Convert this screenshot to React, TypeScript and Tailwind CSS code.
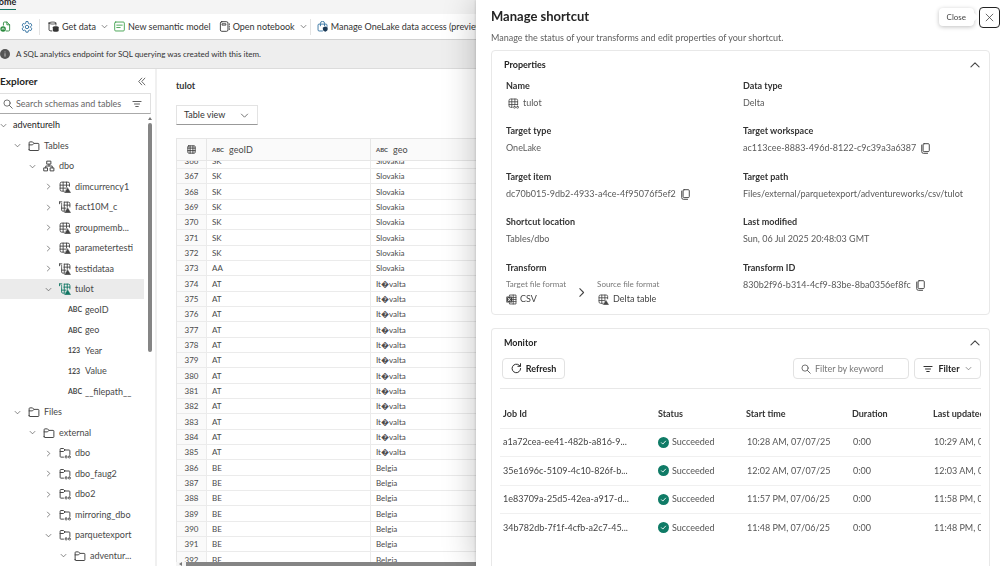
import type { ReactNode } from "react";
import { clsx } from "clsx";

type IconProps = { className?: string };

function Svg({ className, children }: { className?: string; children: ReactNode }) {
  return (
    <svg
      viewBox="0 0 16 16"
      fill="none"
      stroke="currentColor"
      strokeLinecap="round"
      strokeLinejoin="round"
      className={clsx("shrink-0", className)}
      aria-hidden="true"
    >
      {children}
    </svg>
  );
}

const ChevronDown = ({ className }: IconProps) => (
  <Svg className={className}><path d="M2.5 5.5 8 11l5.5-5.5" strokeWidth="1.6" /></Svg>
);
const ChevronRight = ({ className }: IconProps) => (
  <Svg className={className}><path d="M5.5 2.5 11 8l-5.5 5.5" strokeWidth="1.6" /></Svg>
);
const ChevronUp = ({ className }: IconProps) => (
  <Svg className={className}><path d="M1.5 11 8 4.500l6.500 6.500" strokeWidth="1.7" /></Svg>
);
const CollapseIcon = ({ className }: IconProps) => (
  <Svg className={className}><path d="M8.5 2 3 8l5.5 6M14 2 8.5 8l5.5 6" strokeWidth="1.4" /></Svg>
);
const SearchIcon = ({ className }: IconProps) => (
  <Svg className={className}><circle cx="6.5" cy="6.5" r="5" strokeWidth="1.3" /><path d="m10.2 10.2 4.6 4.6" strokeWidth="1.4" /></Svg>
);
const FilterIcon = ({ className }: IconProps) => (
  <Svg className={className}><path d="M1.5 4h13M4 8h8M6 12h4" strokeWidth="1.5" /></Svg>
);
const FolderIcon = ({ className }: IconProps) => (
  <Svg className={className}>
    <path d="M1.5 13V3.5a1 1 0 0 1 1-1H6L8 4.5h5.5a1 1 0 0 1 1 1V13a1 1 0 0 1-1 1h-11a1 1 0 0 1-1-1ZM1.5 6.5H6l2-2" strokeWidth="1.3" />
  </Svg>
);
const FolderLinkIcon = ({ className }: IconProps) => (
  <Svg className={className}>
    <path d="M6 13.5H2.5a1 1 0 0 1-1-1V3a1 1 0 0 1 1-1H6l2 2h5.5a1 1 0 0 1 1 1v5M1.5 6H6l2-2" strokeWidth="1.3" />
    <rect x="8" y="12" width="3" height="2.6" rx="1.3" strokeWidth="1.1" />
    <rect x="12.4" y="12" width="3" height="2.6" rx="1.3" strokeWidth="1.1" />
  </Svg>
);
const SchemaIcon = ({ className }: IconProps) => (
  <Svg className={className}>
    <path d="M5.5 1.5h5v4h-5zM1.5 10.5H6v4H1.5zM10 10.5h4.5v4H10zM8 5.5V8M3.7 10.5V8h8.6v2.5" strokeWidth="1.3" />
  </Svg>
);
const DeltaTableIcon = ({ className }: IconProps) => (
  <Svg className={className}>
    <path d="M7 13.5H3.5a2 2 0 0 1-2-2v-8a2 2 0 0 1 2-2h8.500a2 2 0 0 1 2 2V7M1.5 5.500H14M1.5 9.500h8M5.500 1.500v12M10 1.500V8" strokeWidth="1.2" />
    <path d="m11.5 9 4 6.500h-8z" fill="currentColor" strokeWidth="0.5" />
  </Svg>
);
const DeltaShortcutIcon = ({ className }: IconProps) => (
  <Svg className={className}>
    <path d="M7 13.5H5A1.5 1.5 0 0 1 3.5 12V6M7 1.500h5.500a2 2 0 0 1 2 2V8M6.500 5.500h8M3.500 9.500H9M7 1.500v12M11 1.500V8" strokeWidth="1.2" />
    <path d="M.8 1.200h3M.8 1.200v2.500M3.500 3.500v1" strokeWidth="1.3" />
    <path d="m11.5 9 4 6.500h-8z" fill="currentColor" strokeWidth="0.5" />
  </Svg>
);
const TableLinkIcon = ({ className }: IconProps) => (
  <Svg className={className}>
    <path d="M6 13.5H3.5a2 2 0 0 1-2-2v-8a2 2 0 0 1 2-2h8.500a2 2 0 0 1 2 2v6M1.5 5.500H14M1.5 9.500H14M5.500 1.500v12M10 1.500v8" strokeWidth="1.2" />
    <rect x="8" y="12" width="3" height="2.8" rx="1.4" strokeWidth="1.1" />
    <rect x="12.4" y="12" width="3" height="2.8" rx="1.4" strokeWidth="1.1" />
  </Svg>
);
const GridIcon = ({ className }: IconProps) => (
  <Svg className={className}>
    <rect x="1.5" y="1.5" width="13" height="13" rx="1.5" strokeWidth="1.5" />
    <path d="M1.5 5.5h13M1.5 10h13M5.5 1.5v13M10.5 1.5v13" strokeWidth="1.5" />
  </Svg>
);
const CopyIcon = ({ className }: IconProps) => (
  <Svg className={className}>
    <rect x="4.5" y="1" width="9" height="11.5" rx="1.5" strokeWidth="1.4" />
    <path d="M2.5 3v9.5A2.5 2.5 0 0 0 5 15h6" strokeWidth="1.4" />
  </Svg>
);
const ExcelIcon = ({ className }: IconProps) => (
  <Svg className={className}>
    <path d="M5 3V1.5h9.5v13H5V13M9.5 5h5M9.5 8h5M9.5 11h5M10.5 1.5v13" strokeWidth="1.2" />
    <rect x="0.5" y="3.5" width="8.5" height="9" rx="1" fill="currentColor" stroke="none" />
    <path d="m3 5.8 3.5 4.4M6.5 5.8 3 10.2" stroke="#fff" strokeWidth="1.2" />
  </Svg>
);
const RefreshIcon = ({ className }: IconProps) => (
  <Svg className={className}><path d="M14 8a6.200 6.200 0 1 1-2.200-4.800l1.700 1.600M13.800 1v3.800H10" strokeWidth="1.4" /></Svg>
);
const CloseIcon = ({ className }: IconProps) => (
  <Svg className={className}><path d="m2 2 12 12M14 2 2 14" strokeWidth="1.4" /></Svg>
);
const InfoIcon = ({ className }: IconProps) => (
  <Svg className={className}>
    <circle cx="8" cy="8" r="8" fill="currentColor" stroke="none" />
    <path d="M8 7.5v4M8 4.700v.1" stroke="#ddd" strokeWidth="1.3" />
  </Svg>
);
const CheckIcon = ({ className }: IconProps) => (
  <Svg className={className}>
    <circle cx="8" cy="8" r="8" fill="currentColor" stroke="none" />
    <path d="m5 8.3 2 2 4-4.300" stroke="#fff" strokeWidth="1.3" />
  </Svg>
);
const ReportIcon = ({ className }: IconProps) => (
  <Svg className={className}>
    <path d="M5 6V3a1.500 1.500 0 0 1 1.500-1.500H10l4 4V13a1.500 1.500 0 0 1-1.500 1.500H9M10 1.500v4h4" strokeWidth="1.3" />
    <circle cx="4.5" cy="11.5" r="4" fill="currentColor" stroke="none" />
    <path d="M3 12.5a1.600 1.600 0 1 1 3 0" stroke="#fff" />
  </Svg>
);
const GearIcon = ({ className }: IconProps) => (
  <Svg className={className}>
    <path d="m6.600 1.200-.4 2-1.300.7-1.900-.7-1.500 2.500L3 7v1.900l-1.500 1.400L3 12.800l1.900-.6 1.300.7.4 2h2.800l.4-2 1.300-.7 1.900.6 1.500-2.500L13 8.900V7l1.500-1.300L13 3.200l-1.900.7-1.300-.7-.4-2Z" strokeWidth="1.2" />
    <circle cx="8" cy="8" r="2.3" strokeWidth="1.2" />
  </Svg>
);
const DatabaseIcon = ({ className }: IconProps) => (
  <Svg className={className}>
    <path d="M1.5 3c0-2 10-2 10 0s-10 2-10 0Zm0 0v10c0 1 2 1.500 4 1.500M11.500 3v3" strokeWidth="1.3" />
    <path d="M7 9c0-2 8.500-2 8.500 0v5c0 2-8.500 2-8.500 0Z" fill="currentColor" stroke="none" />
  </Svg>
);
const ModelIcon = ({ className }: IconProps) => (
  <Svg className={className}>
    <rect x="1" y="1.5" width="14" height="13" rx="1.5" strokeWidth="1.3" />
    <path d="M4 6h8M4 9.500h5" strokeWidth="1.3" />
  </Svg>
);
const NotebookIcon = ({ className }: IconProps) => (
  <Svg className={className}>
    <rect x="2" y="1" width="11" height="14" rx="2" strokeWidth="1.3" />
    <path d="M5 4h5v2H5zM15 4v1.500M15 7.500V9M15 11v1.500" strokeWidth="1.2" />
  </Svg>
);
const LockIcon = ({ className }: IconProps) => (
  <Svg className={className}>
    <path d="M8 14.5H3A1.500 1.500 0 0 1 1.500 13V6A1.500 1.500 0 0 1 3 4.500h10A1.500 1.500 0 0 1 14.500 6v2M5 7V3.500a3 3 0 0 1 6 0V7" strokeWidth="1.3" />
    <path d="M8.5 9.500 12 8l3.500 1.500v2c0 2-1.500 3.500-3.500 4-2-.5-3.500-2-3.500-4Z" fill="#1b3a57" stroke="none" />
  </Svg>
);

type Node = { label: string; level: number; open?: boolean; icon?: "folder" | "link" | "schema" | "delta" | "shortcut"; type?: string };

const tree: Node[] = [
  { label: "adventurelh", level: 0, open: true },
  { label: "Tables", level: 1, open: true, icon: "folder" },
  { label: "dbo", level: 2, open: true, icon: "schema" },
  { label: "dimcurrency1", level: 3, open: false, icon: "delta" },
  { label: "fact10M_c", level: 3, open: false, icon: "shortcut" },
  { label: "groupmemb...", level: 3, open: false, icon: "delta" },
  { label: "parametertesti", level: 3, open: false, icon: "delta" },
  { label: "testidataa", level: 3, open: false, icon: "shortcut" },
  { label: "tulot", level: 3, open: true, icon: "shortcut" },
  { label: "geoID", level: 4, type: "ABC" },
  { label: "geo", level: 4, type: "ABC" },
  { label: "Year", level: 4, type: "123" },
  { label: "Value", level: 4, type: "123" },
  { label: "__filepath__", level: 4, type: "ABC" },
  { label: "Files", level: 1, open: true, icon: "folder" },
  { label: "external", level: 2, open: true, icon: "folder" },
  { label: "dbo", level: 3, open: false, icon: "link" },
  { label: "dbo_faug2", level: 3, open: false, icon: "link" },
  { label: "dbo2", level: 3, open: false, icon: "link" },
  { label: "mirroring_dbo", level: 3, open: false, icon: "link" },
  { label: "parquetexport", level: 3, open: true, icon: "link" },
  { label: "adventur...", level: 4, open: true, icon: "folder" },
];

const indent = ["pl-0", "pl-[14px]", "pl-[29px]", "pl-[45px]", "pl-[60px]"];

const treeIcons = {
  folder: FolderIcon,
  link: FolderLinkIcon,
  schema: SchemaIcon,
  delta: DeltaTableIcon,
  shortcut: DeltaShortcutIcon,
};

const rows = Array.from({ length: 27 }, (_, i) => {
  const id = 366 + i;
  if (id < 373) return { id, code: "SK", geo: "Slovakia" };
  if (id === 373) return { id, code: "AA", geo: "Slovakia" };
  if (id < 386) return { id, code: "AT", geo: "It\uFFFDvalta" };
  return { id, code: "BE", geo: "Belgia" };
});

const jobs = [
  { id: "a1a72cea-ee41-482b-a816-9...", start: "10:28 AM, 07/07/25", updated: "10:29 AM, 07/07/25" },
  { id: "35e1696c-5109-4c10-826f-b...", start: "12:02 AM, 07/07/25", updated: "12:03 AM, 07/07/25" },
  { id: "1e83709a-25d5-42ea-a917-d...", start: "11:57 PM, 07/06/25", updated: "11:58 PM, 07/06/25" },
  { id: "34b782db-7f1f-4cfb-a2c7-45...", start: "11:48 PM, 07/06/25", updated: "11:48 PM, 07/06/25" },
];

function Toolbar() {
  return (
    <div className="flex h-[26px] shrink-0 items-center border-b border-[#d2d2d2] bg-white text-[9px] whitespace-nowrap text-[#333]">
      <button aria-label="Reports"><ReportIcon className="size-[11px] text-[#2b8a3e]" /></button>
      <button aria-label="Settings" className="ml-[10px]"><GearIcon className="size-3 text-[#2f6f9f]" /></button>
      <span className="ml-[6px] h-4 w-px bg-[#e3e3e3]" />
      <button className="ml-2 flex items-center gap-[3px]">
        <DatabaseIcon className="size-[11px] text-[#333]" />
        Get data
        <ChevronDown className="ml-[2px] size-[7px] text-[#555]" />
      </button>
      <button className="ml-[6px] flex items-center gap-[3px]">
        <ModelIcon className="size-[11px] text-[#3da04a]" />
        New semantic model
      </button>
      <button className="ml-2 flex items-center gap-[3px]">
        <NotebookIcon className="size-[11px] text-[#333]" />
        Open notebook
        <ChevronDown className="ml-[2px] size-[7px] text-[#555]" />
      </button>
      <span className="ml-[3px] h-4 w-px bg-[#e3e3e3]" />
      <button className="ml-[6px] flex items-center gap-[3px]">
        <LockIcon className="size-[11px] text-[#2f6f9f]" />
        Manage OneLake data access (preview)
      </button>
    </div>
  );
}

function TreeRow({ node }: { node: Node }) {
  const Icon = node.icon && treeIcons[node.icon];
  const selected = node.label === "tulot";
  const Chevron = node.open ? ChevronDown : ChevronRight;
  return (
    <li
      className={clsx(
        "flex h-5 items-center text-[9px] whitespace-nowrap even:h-[21px]",
        indent[node.level],
        selected && "bg-[#ebebeb]",
        node.level === 0 ? "text-[#222]" : "text-[#484848]",
      )}
    >
      {node.type ? (
        <span className="w-[21px] pl-2 text-[7px] font-bold">{node.type}</span>
      ) : (
        <Chevron className={clsx("size-[7px] text-[#555]", node.level === 0 ? "mr-[2px]" : "mr-[7px]")} />
      )}
      {Icon && <Icon className={clsx("size-3", selected ? "text-[#0f7562]" : "text-[#444]")} />}
      <span className="ml-1">{node.label}</span>
    </li>
  );
}

function Explorer() {
  return (
    <nav className="flex w-[157px] shrink-0 flex-col border-r-2 border-[#f0f0f0]">
      <div className="flex h-[24px] shrink-0 items-center justify-between pr-[9px]">
        <h2 className="text-[10px] leading-3 font-bold text-[#242424]">Explorer</h2>
        <button aria-label="Collapse explorer"><CollapseIcon className="size-[9px] text-[#444]" /></button>
      </div>
      <label className="mr-[4px] flex h-[21px] shrink-0 items-center border border-l-0 border-[#e0e0e0] border-b-[#aaa] pr-2 pl-[3px]">
        <SearchIcon className="size-[10px] text-[#555]" />
        <input
          aria-label="Search schemas and tables"
          placeholder="Search schemas and tables"
          className="ml-[3px] min-w-0 flex-1 text-[9px] outline-none placeholder:text-[#666]"
        />
        <FilterIcon className="size-[10px] text-[#555]" />
      </label>
      <div className="flex min-h-0 flex-1 overflow-hidden">
        <ul className="min-w-0 flex-1 pt-px">
          {tree.map((node, i) => <TreeRow key={i} node={node} />)}
        </ul>
        <div className="flex w-[11px] shrink-0 flex-col items-center gap-[3px] pt-[3px]">
          <span className="border-x-2 border-b-3 border-x-transparent border-b-[#777]" />
          <span className="h-[229px] w-1 rounded-full bg-[#858585]" />
        </div>
      </div>
    </nav>
  );
}

function ColumnHeader({ label }: { label: string }) {
  return (
    <span className="flex items-center gap-[5px] text-[9px] font-normal">
      <span className="text-[6px] font-bold">ABC</span>
      {label}
    </span>
  );
}

function DataTable() {
  return (
    <main className="flex min-w-0 flex-1 flex-col pt-[9px] pl-[19px]">
      <h1 className="text-[9px] leading-4 font-bold text-[#333]">tulot</h1>
      <button className="mt-[11px] flex h-[20px] w-[82px] shrink-0 items-center justify-between border border-[#e3e3e3] border-b-[#999] pr-2 pl-[7px] text-[9px] text-[#333]">
        Table view
        <ChevronDown className="size-[9px] text-[#666]" />
      </button>
      <div className="mt-[13px] min-h-0 flex-1 overflow-hidden border-t border-l border-[#e6e6e6]">
        <table className="-mt-[7px] w-full table-fixed border-separate border-spacing-0 text-left text-[8px] leading-3 text-[#4a4a4a]">
          <thead>
            <tr className="*:sticky *:top-0 *:h-[22px] *:border-r *:border-b *:border-[#e6e6e6] *:bg-[#fafafa] *:px-[5px] *:py-0">
              <th className="w-[30px]"><GridIcon className="mx-auto size-[9px] text-[#333]" /></th>
              <th className="w-[164px]"><ColumnHeader label="geoID" /></th>
              <th><ColumnHeader label="geo" /></th>
            </tr>
          </thead>
          <tbody>
            {rows.map((row) => (
              <tr key={row.id} className="h-[15px] *:border-r *:border-b *:border-[#ebebeb] *:px-[5px] *:py-0 nth-[3n]:h-4">
                <td className="bg-[#fafafa] text-center">{row.id}</td>
                <td>{row.code}</td>
                <td>{row.geo}</td>
              </tr>
            ))}
          </tbody>
        </table>
      </div>
      <div className="flex h-1 shrink-0 items-center gap-1 bg-[#f5f5f5] pl-[3px]">
        <span className="border-y-2 border-r-3 border-y-transparent border-r-[#777]" />
        <span className="h-1 flex-1 bg-[#858585]" />
      </div>
    </main>
  );
}

function Field({ label, children, copy }: { label: string; children: ReactNode; copy?: boolean }) {
  return (
    <div className="h-[45px] even:h-[46px]">
      <dt className="text-[9px] leading-[14px] font-bold text-[#333]">{label}</dt>
      <dd className="mt-[3px] flex h-[14px] items-center gap-1 text-[9px] leading-[14px] text-[#5a5a5a]">
        {children}
        {copy && <button aria-label={`Copy ${label}`}><CopyIcon className="size-[11px] text-[#444]" /></button>}
      </dd>
    </div>
  );
}

function Properties() {
  return (
    <section className="rounded border border-[#e8e8e8] pb-[3px]">
      <div className="flex h-[28px] items-center justify-between pr-[9px] pl-3">
        <h3 className="text-[9px] font-bold text-[#242424]">Properties</h3>
        <button aria-label="Collapse properties"><ChevronUp className="size-[10px] text-[#444]" /></button>
      </div>
      <div className="grid grid-cols-[237px_1fr] pl-[14px]">
        <dl>
          <Field label="Name"><TableLinkIcon className="ml-[2px] size-[11px] text-[#444]" />tulot</Field>
          <Field label="Target type">OneLake</Field>
          <Field label="Target item" copy>dc70b015-9db2-4933-a4ce-4f95076f5ef2</Field>
          <Field label="Shortcut location">Tables/dbo</Field>
          <div className="pb-[5px]">
            <dt className="text-[9px] leading-[14px] font-bold text-[#333]">Transform</dt>
            <dd className="mt-[3px] flex items-center text-[#444]">
              <div>
                <p className="text-[8px] leading-3 text-[#777]">Target file format</p>
                <p className="mt-[2px] flex items-center gap-[3px] text-[9px] leading-[14px]"><ExcelIcon className="size-[11px]" />CSV</p>
              </div>
              <ChevronRight className="mx-[10px] size-[11px]" />
              <div>
                <p className="text-[8px] leading-3 text-[#777]">Source file format</p>
                <p className="mt-[2px] flex items-center gap-1 pl-px text-[9px] leading-[14px]"><DeltaTableIcon className="size-[11px]" />Delta table</p>
              </div>
            </dd>
          </div>
        </dl>
        <dl>
          <Field label="Data type">Delta</Field>
          <Field label="Target workspace" copy>ac113cee-8883-496d-8122-c9c39a3a6387</Field>
          <Field label="Target path">Files/external/parquetexport/adventureworks/csv/tulot</Field>
          <Field label="Last modified">Sun, 06 Jul 2025 20:48:03 GMT</Field>
          <Field label="Transform ID" copy>830b2f96-b314-4cf9-83be-8ba0356ef8fc</Field>
        </dl>
      </div>
    </section>
  );
}

function Monitor() {
  return (
    <section className="mt-[13px] flex-1 rounded-t border border-b-0 border-[#e8e8e8] px-2">
      <div className="flex h-[28px] items-center justify-between pr-px pl-1">
        <h3 className="text-[9px] font-bold text-[#242424]">Monitor</h3>
        <button aria-label="Collapse monitor"><ChevronUp className="size-[10px] text-[#444]" /></button>
      </div>
      <div className="flex items-center gap-[5px] border-b border-[#e8e8e8] pt-px pb-[9px] pl-[2px] *:h-[21px] *:rounded-sm *:border *:border-[#e2e2e2]">
        <button className="flex w-[63px] items-center justify-center gap-1 text-[9px] font-bold text-[#242424]">
          <RefreshIcon className="size-[11px]" />
          Refresh
        </button>
        <label className="ml-auto flex w-[116px] items-center gap-1 px-[7px]">
          <SearchIcon className="size-[10px] text-[#555]" />
          <input aria-label="Filter by keyword" placeholder="Filter by keyword" className="w-full min-w-0 text-[9px] outline-none placeholder:text-[#777]" />
        </label>
        <button className="flex w-[67px] items-center justify-between px-2 text-[9px] font-bold text-[#242424]">
          <FilterIcon className="size-[10px]" />
          Filter
          <ChevronDown className="size-[7px] text-[#666]" />
        </button>
      </div>
      <div className="overflow-hidden pt-[11px]">
        <table className="w-[540px] table-fixed text-left text-[9px] whitespace-nowrap text-[#555]">
          <thead>
            <tr className="h-[28px] font-bold text-[#333] *:p-0">
              <th className="w-[158px]"><span className="pl-[3px]">Job Id</span></th>
              <th className="w-[88px]">Status</th>
              <th className="w-[106px]">Start time</th>
              <th className="w-[81px]">Duration</th>
              <th>Last updated</th>
            </tr>
          </thead>
          <tbody>
            {jobs.map((job) => (
              <tr key={job.id} className="h-[28px] border-t border-[#f0f0f0] *:p-0 even:h-[29px]">
                <td className="text-[#444]"><span className="pl-[3px]">{job.id}</span></td>
                <td>
                  <span className="flex items-center gap-[3px]">
                    <CheckIcon className="size-[11px] text-[#0f7b66]" />
                    Succeeded
                  </span>
                </td>
                <td><span className="pl-px">{job.start}</span></td>
                <td><span className="pl-px">0:00</span></td>
                <td><span className="pl-px">{job.updated}</span></td>
              </tr>
            ))}
          </tbody>
        </table>
      </div>
    </section>
  );
}

function ShortcutPanel() {
  return (
    <aside className="absolute inset-y-0 right-0 z-10 flex w-[524px] max-w-full flex-col bg-white pr-[10px] pl-[15px] shadow-[0_0_3px_rgba(0,0,0,0.2),0_0_32px_rgba(0,0,0,0.24)]">
      <div className="flex h-[31px] shrink-0 items-center">
        <h2 className="mr-auto pt-px text-[13px] leading-4 font-bold text-[#242424]">Manage shortcut</h2>
        <div role="tooltip" className="relative mt-[2px] rounded-sm bg-white px-2 py-[3px] text-[8px] leading-3 text-[#444] shadow-[0_1px_4px_rgba(0,0,0,0.25)]">
          Close
          <span className="absolute top-[6px] -right-[3px] size-[6px] rotate-45 bg-white" />
        </div>
        <button aria-label="Close" className="mt-[3px] -mr-[10px] ml-[5px] flex size-[21px] items-center justify-center rounded-sm border border-[#222]">
          <CloseIcon className="size-[9px] text-[#444]" />
        </button>
      </div>
      <p className="shrink-0 pb-[5px] text-[9px] leading-[14px] text-[#616161]">
        Manage the status of your transforms and edit properties of your shortcut.
      </p>
      <Properties />
      <Monitor />
    </aside>
  );
}

export default function App() {
  return (
    <div className="relative flex h-screen flex-col overflow-hidden bg-white font-['Lato','Open_Sans',sans-serif]">
      <header className="flex h-[14px] shrink-0 items-start overflow-hidden bg-[#f4f4f4]">
        <a href="#home" className="-mt-[5px] -ml-[8px] border-b border-[#117865] pb-px text-[9px] leading-[13px] font-bold text-[#242424]">Home</a>
      </header>
      <Toolbar />
      <div className="flex h-[29px] shrink-0 items-center gap-[6px] border-b border-[#dcdcdc] bg-[#eee] text-[8px] text-[#333]">
        <InfoIcon className="size-[10px] text-[#555]" />
        A SQL analytics endpoint for SQL querying was created with this item.
      </div>
      <div className="flex min-h-0 flex-1">
        <Explorer />
        <DataTable />
      </div>
      <ShortcutPanel />
    </div>
  );
}
